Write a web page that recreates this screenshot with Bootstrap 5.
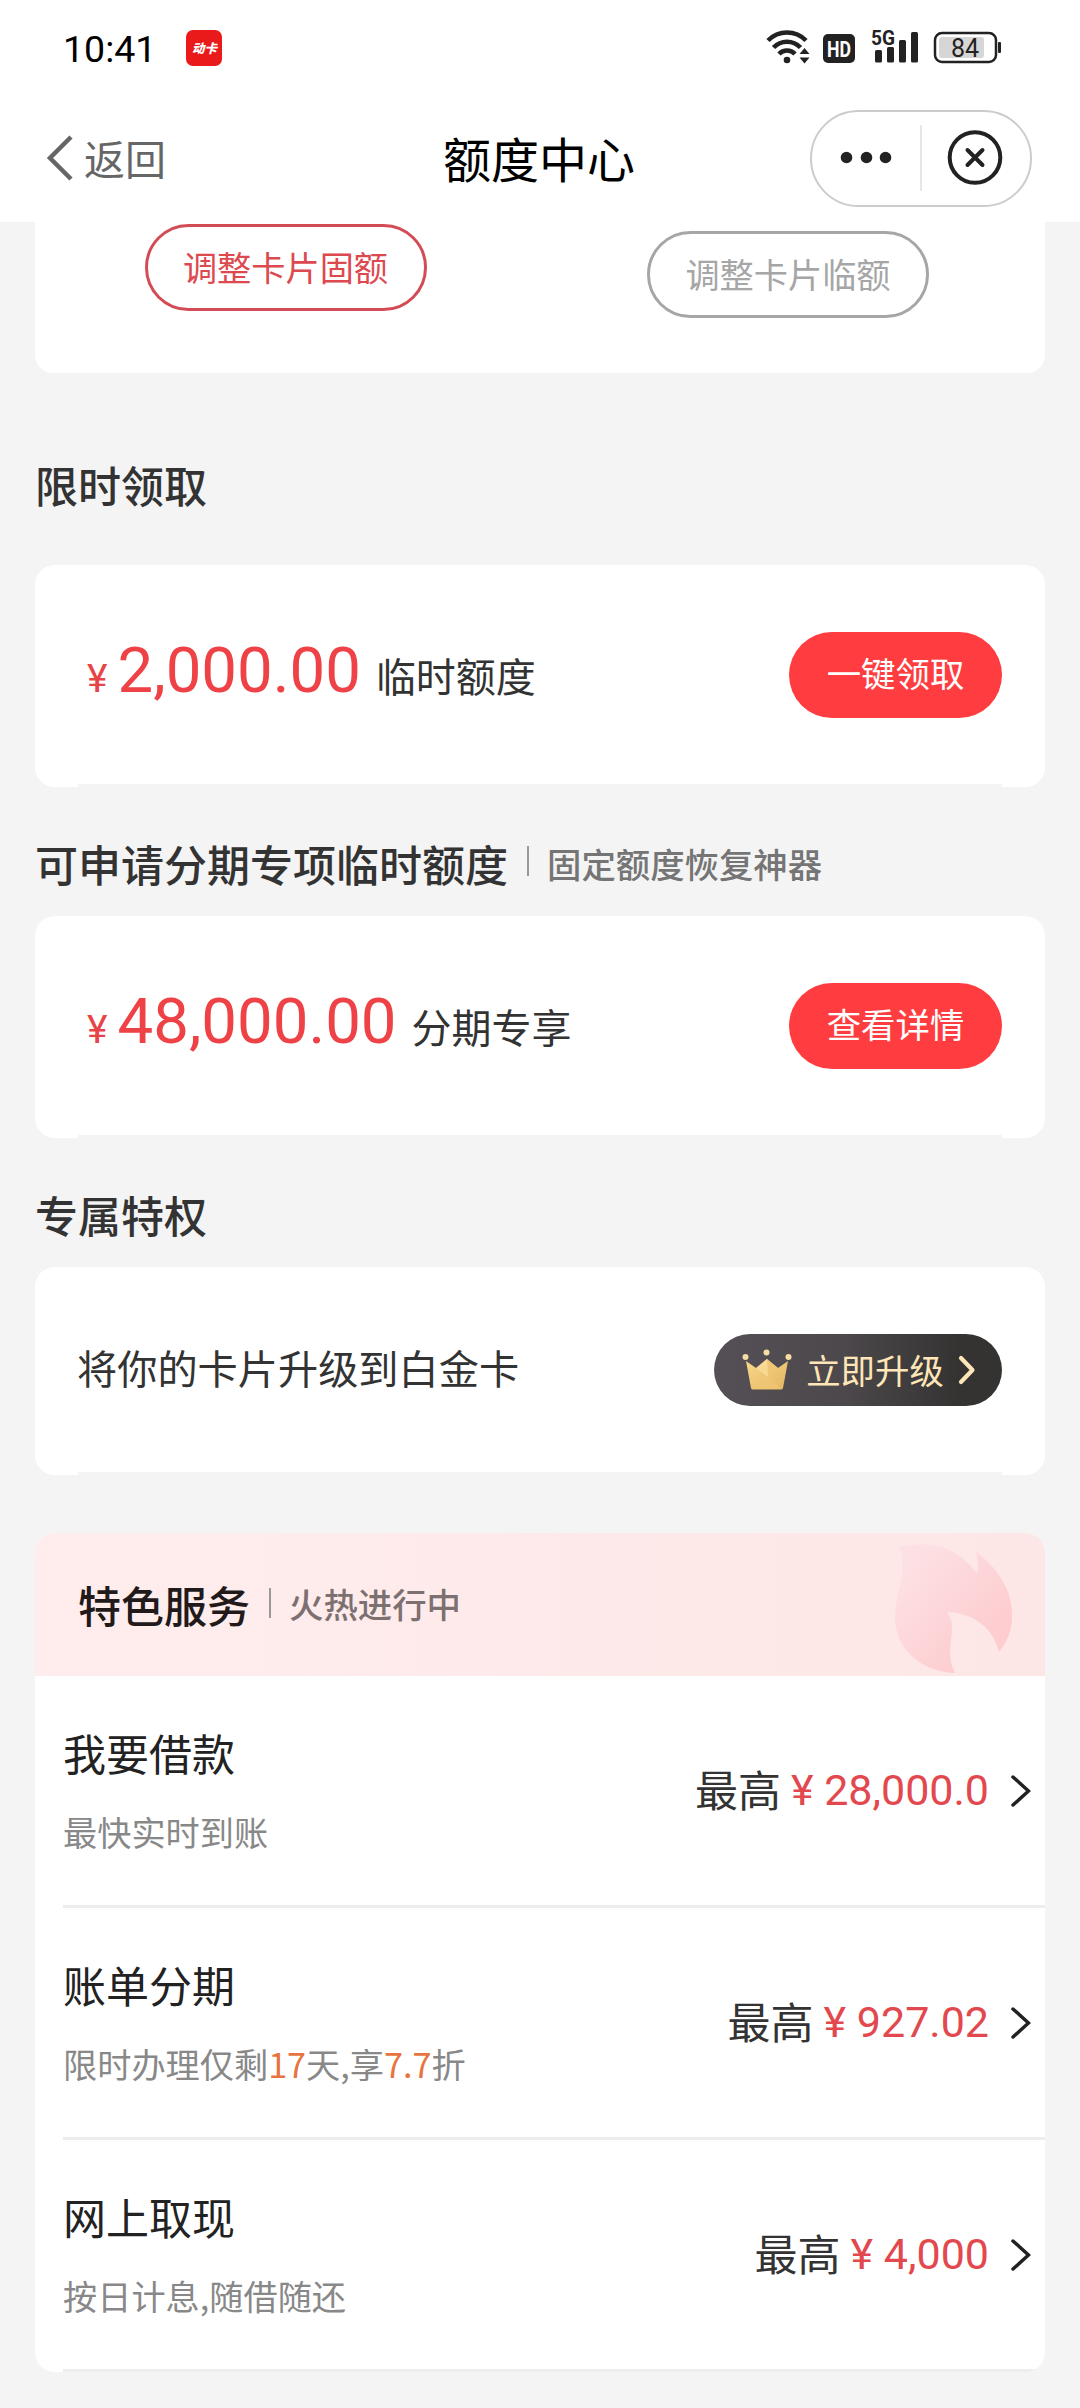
<!DOCTYPE html>
<html lang="zh-CN">
<head>
<meta charset="utf-8">
<meta name="viewport" content="width=device-width, initial-scale=1">
<title>额度中心</title>
<link href="https://cdn.jsdelivr.net/npm/bootstrap@5.3.0/dist/css/bootstrap.min.css" rel="stylesheet">
<style>
  body { background: #f4f4f4; font-family: "Noto Sans CJK SC", "Noto Sans", sans-serif; color: #333; min-height: 2408px; }
  svg { display: block; flex: none; }
  .num { font-family: Roboto, "Noto Sans CJK SC", sans-serif; }
  .statusbar { height: 94px; padding-left: 63px; padding-right: 78px; }
  .clock { font-size: 37.5px; line-height: 40px; color: #000; padding-top: 3px; }
  .app-tile { width: 36px; height: 36px; margin-left: 30px; margin-top: 2px; border-radius: 7px; background: #ea1a1a; color: #fff; font-size: 12.5px; font-weight: 900; font-style: italic; line-height: 36px; }
  .navrow { height: 128px; }
  .back { flex: 1; padding-left: 46px; color: #666; font-size: 41px; line-height: 50px; text-decoration: none; }
  .back-label { margin-left: 10px; padding-bottom: 2px; }
  .page-title { font-size: 48px; line-height: 60px; color: #000; font-weight: 400; padding-bottom: 3px; }
  .capsule-side { flex: 1; padding-right: 48px; }
  .capsule { width: 222px; height: 97px; border: 2px solid #ccc; border-radius: 49px; }
  main { padding: 0 35px; }
  .limit-card { height: 151px; border-radius: 0 0 18px 18px; }
  .pill { height: 87px; width: 282px; border-radius: 44px; border: 3px solid; font-size: 34.2px; line-height: 46px; padding: 0 0 4px; }
  .pill-red { color: #dc4a50; border-color: #d34b55; margin-top: 2px; margin-right: 4px; }
  .pill-gray { color: #a6a6a6; border-color: #a6a6a6; margin-top: 9px; margin-right: 9px; }
  .sec-title { font-size: 43px; line-height: 60px; font-weight: 500; color: #333; }
  .sec-head { margin: 46px 0 23px; height: 60px; }
  .sec-head-lg { margin: 81px 0 51px; }
  .sep { width: 2px; height: 30px; background: #999; margin: 0 18px 4px 19px; }
  .hint { font-size: 34.4px; line-height: 46px; color: #757575; font-weight: 500; padding-bottom: 1px; }
  .panel { border-radius: 20px; height: 222px; }
  .panel-sm { height: 208px; }
  .panel-body { padding: 0 43px 0 52px; }
  .panel-cut { height: 3px; margin: 0 43px; background: #f4f4f4; }
  .yen { font-size: 39px; line-height: 64px; color: #e84448; margin-right: 10px; }
  .sum { font-size: 63.5px; line-height: 64px; color: #ee4246; }
  .what { font-size: 40px; line-height: 64px; margin-left: 15px; }
  .go { width: 213px; height: 86px; border-radius: 43px; background: #ff3d40; color: #fff; font-size: 34.4px; line-height: 46px; border: 0; padding: 0 0 5px; }
  .upgrade-text { font-size: 40.2px; line-height: 54px; padding-bottom: 5px; }
  .upgrade-body { padding-left: 42px; }
  .upgrade { width: 288px; height: 72px; border-radius: 36px; border: 0; padding: 0 26px 0 28px; background: linear-gradient(90deg, #555056, #4c484b 45%, #343332 85%); color: #ffe6b8; font-size: 34.4px; line-height: 46px; }
  .upgrade-label { padding-bottom: 2px; }
  .services { margin-top: 58px; border-radius: 20px; overflow: hidden; }
  .banner { height: 143px; padding-left: 43px; padding-right: 31px; background: linear-gradient(90deg, #ffeded, #feeaea 45%, #fde6e6); }
  .banner-title { color: #221a1a; padding-bottom: 2px; }
  .banner-hint { color: #7c7070; padding-bottom: 3px; }
  .svc-list { padding-left: 28px; }
  .svc { height: 229px; padding-right: 14px; }
  .svc-line { height: 3px; background: #ededed; }
  .svc-info { padding-bottom: 5px; }
  .svc-name { font-size: 43px; line-height: 60px; color: #222; }
  .svc-sub { font-size: 34.2px; line-height: 46px; color: #888; margin-top: 26px; }
  .hot { color: #e77440; }
  .svc-max { font-size: 43px; line-height: 60px; padding-bottom: 6px; }
  .svc-val { font-size: 43px; line-height: 60px; color: #e2484e; margin-left: 10px; margin-right: 22px; padding-bottom: 1px; }
</style>
</head>
<body>
<header class="bg-white">
  <div class="statusbar d-flex align-items-center justify-content-between">
    <div class="d-flex align-items-center">
      <div class="clock num">10:41</div>
      <div class="app-tile text-center">动卡</div>
    </div>
    <svg width="236" height="58" viewBox="0 -10 236 58">
      <g fill="none" stroke="#222" stroke-width="4.500">
        <path d="M2 12.500a26.500 26.500 0 0 1 38 0"/>
        <path d="M7.500 19.500a18.500 18.500 0 0 1 27 0"/>
        <path d="M13 26a11 11 0 0 1 16 0"/>
      </g>
      <circle cx="21" cy="32" r="3.300" fill="#222"/>
      <path d="M33.500 26l5-6 5 6zM33.500 29.500l5 6 5-6z" fill="#222"/>
      <rect x="57" y="6" width="32" height="29" rx="5" fill="#222"/>
      <text x="73" y="28.500" text-anchor="middle" font-family="Roboto" font-weight="700" font-size="22" fill="#fff" textLength="24" lengthAdjust="spacingAndGlyphs">HD</text>
      <text x="105" y="17" font-family="Roboto" font-weight="700" font-size="20" fill="#222" textLength="24" lengthAdjust="spacingAndGlyphs">5G</text>
      <g fill="#222">
        <rect x="109" y="22" width="7" height="12.500" rx="1.500"/><rect x="121" y="19" width="7" height="15.500" rx="1.500"/>
        <rect x="133" y="12" width="7" height="22.500" rx="1.500"/><rect x="145" y="4" width="7" height="30.500" rx="1.500"/>
        <rect x="232" y="14" width="3" height="11" rx="1"/>
      </g>
      <rect x="169" y="5" width="61" height="29" rx="7" fill="#fff" stroke="#222" stroke-width="2.500"/>
      <rect x="173" y="9" width="45" height="21" rx="3" fill="#d6d6d6"/>
      <text x="199" y="28.500" text-anchor="middle" font-family="Roboto" font-size="25" fill="#222">84</text>
    </svg>
  </div>
  <nav class="navrow d-flex align-items-center">
    <a class="back d-flex align-items-center" href="#">
      <svg width="28" height="46" viewBox="0 0 28 46"><path d="M25 2L4 23l21 21" fill="none" stroke="#666" stroke-width="4.500"/></svg>
      <span class="back-label">返回</span>
    </a>
    <h1 class="page-title m-0">额度中心</h1>
    <div class="capsule-side d-flex justify-content-end">
      <div class="capsule">
        <svg width="218" height="93" viewBox="0 0 218 93">
          <g fill="#222"><circle cx="34.500" cy="45.500" r="5.800"/><circle cx="54.500" cy="45.500" r="5.800"/><circle cx="73.500" cy="45.500" r="5.800"/></g>
          <path d="M109 13v66" stroke="#e6e6e6" stroke-width="2"/>
          <circle cx="163" cy="45.500" r="25.300" fill="none" stroke="#222" stroke-width="4"/>
          <path d="M155.500 38l15 15M170.500 38l-15 15" stroke="#222" stroke-width="4" stroke-linecap="round"/>
        </svg>
      </div>
    </div>
  </nav>
</header>

<main>
  <section class="limit-card bg-white row g-0">
    <div class="col-6 d-flex justify-content-center align-items-start"><button class="pill pill-red bg-white">调整卡片固额</button></div>
    <div class="col-6 d-flex justify-content-center align-items-start"><button class="pill pill-gray bg-white">调整卡片临额</button></div>
  </section>

  <div class="sec-head sec-head-lg"><h2 class="sec-title m-0">限时领取</h2></div>
  <section class="panel bg-white d-flex flex-column">
    <div class="panel-body flex-grow-1 d-flex align-items-center justify-content-between">
      <div class="d-flex align-items-baseline"><span class="yen num">¥</span><span class="sum num">2,000.00</span><span class="what">临时额度</span></div>
      <button class="go">一键领取</button>
    </div>
    <div class="panel-cut"></div>
  </section>

  <div class="sec-head d-flex align-items-center"><h2 class="sec-title m-0">可申请分期专项临时额度</h2><span class="sep"></span><span class="hint">固定额度恢复神器</span></div>
  <section class="panel bg-white d-flex flex-column">
    <div class="panel-body flex-grow-1 d-flex align-items-center justify-content-between">
      <div class="d-flex align-items-baseline"><span class="yen num">¥</span><span class="sum num">48,000.00</span><span class="what">分期专享</span></div>
      <button class="go">查看详情</button>
    </div>
    <div class="panel-cut"></div>
  </section>

  <div class="sec-head"><h2 class="sec-title m-0">专属特权</h2></div>
  <section class="panel panel-sm bg-white d-flex flex-column">
    <div class="panel-body upgrade-body flex-grow-1 d-flex align-items-center justify-content-between">
      <span class="upgrade-text">将你的卡片升级到白金卡</span>
      <button class="upgrade d-flex align-items-center justify-content-between">
        <svg width="50" height="42" viewBox="0 0 50 42">
          <defs><linearGradient id="gold" x1="0" y1="0" x2="1" y2="1"><stop offset="0" stop-color="#f8d88e"/><stop offset="1" stop-color="#e5b55e"/></linearGradient></defs>
          <path d="M4 12l10 7 11-9 11 9 10-7-5 27q-.4 1.500-2 1.500H11q-1.600 0-2-1.500z" fill="url(#gold)"/>
          <path d="M25 10l11 9-10 9zM9 40l17-12 14 12z" fill="#efc673" opacity=".8"/>
          <path d="M25 10L14 19l12 9z" fill="#fadc98" opacity=".8"/>
          <g fill="#f6dda6"><circle cx="3.500" cy="8" r="3"/><circle cx="24.500" cy="3.500" r="3"/><circle cx="46.500" cy="8" r="3"/></g>
        </svg>
        <span class="upgrade-label">立即升级</span>
        <svg width="18" height="30" viewBox="0 0 18 30"><path d="M3 3l11.500 12L3 27" fill="none" stroke="#ffe6b8" stroke-width="4.200" stroke-linecap="round" stroke-linejoin="round"/></svg>
      </button>
    </div>
    <div class="panel-cut"></div>
  </section>

  <section class="services bg-white">
    <div class="banner d-flex align-items-center">
      <h2 class="sec-title banner-title m-0">特色服务</h2><span class="sep"></span><span class="hint banner-hint">火热进行中</span>
      <svg class="ms-auto mt-2" width="120" height="132" viewBox="0 0 120 132">
        <defs><linearGradient id="flame" x1="0" y1="0" x2="1" y2="1"><stop offset="0.150" stop-color="#fde0e3"/><stop offset="0.750" stop-color="#fdcdd0"/></linearGradient></defs>
        <path d="M5 4C36-3 65 4 83 31C85 24 84 16 82 9C104 25 119 48 118 74C118 88 113 99 105 109C100 86 80 70 53 69C66 88 48 104 61 130C26 129 1 104 1 75C1 48 15 29 5 4Z" fill="url(#flame)"/>
      </svg>
    </div>
    <div class="svc-list">
      <div class="svc d-flex align-items-center justify-content-between">
        <div class="svc-info"><div class="svc-name">我要借款</div><div class="svc-sub">最快实时到账</div></div>
        <div class="d-flex align-items-center"><span class="svc-max">最高</span><span class="svc-val num">¥ 28,000.0</span>
          <svg width="20" height="34" viewBox="0 0 20 34"><path d="M2 3l15.500 14L2 31" fill="none" stroke="#222" stroke-width="3.500" stroke-linecap="round"/></svg></div>
      </div>
      <div class="svc-line"></div>
      <div class="svc d-flex align-items-center justify-content-between">
        <div class="svc-info"><div class="svc-name">账单分期</div><div class="svc-sub">限时办理仅剩<span class="hot">17</span>天,享<span class="hot">7.7</span>折</div></div>
        <div class="d-flex align-items-center"><span class="svc-max">最高</span><span class="svc-val num">¥ 927.02</span>
          <svg width="20" height="34" viewBox="0 0 20 34"><path d="M2 3l15.500 14L2 31" fill="none" stroke="#222" stroke-width="3.500" stroke-linecap="round"/></svg></div>
      </div>
      <div class="svc-line"></div>
      <div class="svc d-flex align-items-center justify-content-between">
        <div class="svc-info"><div class="svc-name">网上取现</div><div class="svc-sub">按日计息,随借随还</div></div>
        <div class="d-flex align-items-center"><span class="svc-max">最高</span><span class="svc-val num">¥ 4,000</span>
          <svg width="20" height="34" viewBox="0 0 20 34"><path d="M2 3l15.500 14L2 31" fill="none" stroke="#222" stroke-width="3.500" stroke-linecap="round"/></svg></div>
      </div>
      <div class="svc-line"></div>
    </div>
  </section>
</main>
<script src="https://cdn.jsdelivr.net/npm/bootstrap@5.3.0/dist/js/bootstrap.bundle.min.js"></script>
</body>
</html>
